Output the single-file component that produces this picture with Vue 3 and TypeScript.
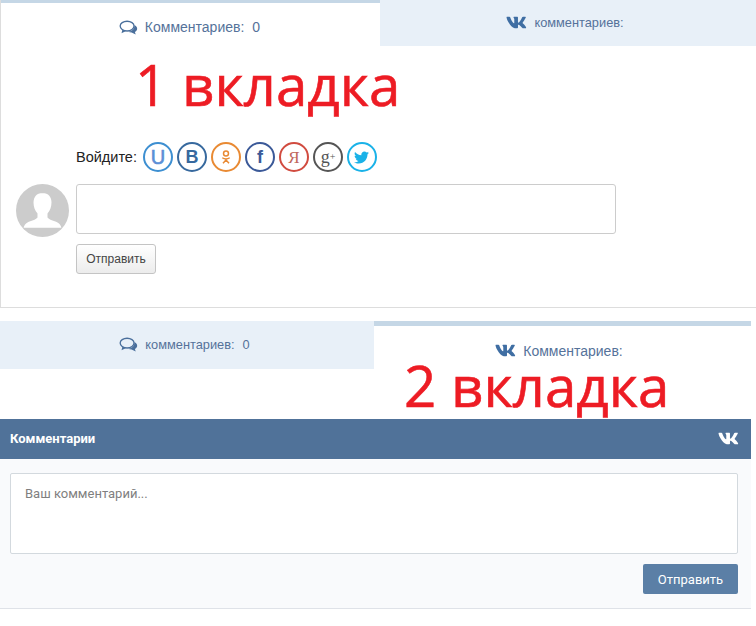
<script setup lang="ts">
const socials = [
  { id: "u", label: "U", color: "#3d8fd1", text: "#5b8fd6" },
  { id: "b", label: "В", color: "#37699e", text: "#37699e" },
  { id: "ok", label: "", color: "#e98a33", text: "#e98a33" },
  { id: "f", label: "f", color: "#3b5998", text: "#3b5998" },
  { id: "ya", label: "Я", color: "#d14b3f", text: "#c0665c" },
  { id: "g", label: "g", color: "#555555", text: "#555555" },
  { id: "tw", label: "", color: "#1ab2e8", text: "#1ab2e8" },
];

const vkPath =
  "M545 117.7c3.7-12.5 0-21.7-17.8-21.7h-58.9c-15 0-21.9 7.9-25.6 16.7 0 0-31.7 77.9-76.5 128.4-14.5 14.6-21.1 19.3-29 19.3-4 0-9.2-4.7-9.2-17.2V117.7c0-15-4.2-21.7-16.6-21.7h-92.6c-9.4 0-15 7-15 13.5 0 14.2 21.2 17.5 23.4 57.4v86.8c0 19-3.4 22.5-10.9 22.5-20 0-68.6-73.4-97.4-157.4-5.8-16.3-11.5-22.9-26.6-22.9H34.1C17.3 96 14 103.9 14 112.7c0 15.6 20 93.1 93.1 195.5C155.8 378 224.4 416 286.9 416c37.5 0 42.1-8.4 42.1-22.9 0-66.8-3.4-73.1 15.4-73.1 8.7 0 23.7 4.4 58.7 38.1 40 40 46.6 57.9 69 57.9h58.9c16.8 0 25.3-8.4 20.4-25-11.2-34.9-86.9-106.7-90.3-111.5-8.7-11.2-6.2-16.2 0-26.2.1-.1 72-101.3 79.4-135.6z";
const twitterPath =
  "M459.37 151.716c.325 4.548.325 9.097.325 13.645 0 138.72-105.583 298.558-298.558 298.558-59.452 0-114.68-17.219-161.137-47.106 8.447.974 16.568 1.299 25.34 1.299 49.055 0 94.213-16.568 130.274-44.832-46.132-.975-84.792-31.188-98.112-72.772 6.498.974 12.995 1.624 19.818 1.624 9.421 0 18.843-1.3 27.614-3.573-48.081-9.747-84.143-51.98-84.143-102.985v-1.299c13.969 7.797 30.214 12.67 47.431 13.319-28.264-18.843-46.781-51.005-46.781-87.391 0-19.492 5.197-37.36 14.294-52.954 51.655 63.675 129.3 105.258 216.365 109.807-1.624-7.797-2.599-15.918-2.599-24.04 0-57.828 46.782-104.934 104.934-104.934 30.213 0 57.502 12.67 76.67 33.137 23.715-4.548 46.456-13.32 66.599-25.34-7.798 24.366-24.366 44.833-46.132 57.827 21.117-2.273 41.584-8.122 60.426-16.243-14.292 20.791-32.161 39.308-52.628 54.253z";
</script>

<template>
  <div class="page">
    <!-- first tab -->
    <section class="block-one">
      <div class="tabs">
        <div class="tab tab-active tab-one-a">
          <svg class="icon-bubbles" viewBox="0 0 20 16">
            <ellipse cx="8.5" cy="6.5" rx="7.4" ry="5.2" fill="none" stroke="#4a6f9c" stroke-width="1.4" />
            <path d="M3.5 10.5 L2.5 14 L7.5 11.6 Z" fill="#4a6f9c" />
            <path d="M16.6 5.5c1.9 1.1 2.9 2.6 2.6 4.3-.2 1.3-1.1 2.3-2.4 3l.9 2.6-4.4-2.2c-1.4 0-2.7-.3-3.8-.9 3.6-.1 7.2-2.6 6.7-6.8z" fill="#4a6f9c" />
          </svg>
          <span>Комментариев:<span class="count">0</span></span>
        </div>
        <div class="tab tab-idle tab-one-b">
          <svg class="icon-vk" viewBox="0 0 576 512"><path :d="vkPath" /></svg>
          <span class="small">комментариев:</span>
        </div>
      </div>

      <div class="note note-one">1 вкладка</div>

      <div class="login">
        <span class="login-label">Войдите:</span>
        <div class="socials">
          <span
            v-for="s in socials"
            :key="s.id"
            class="social"
            :class="'social-' + s.id"
            :style="{ borderColor: s.color, color: s.text }"
          >
            <svg v-if="s.id === 'ok'" class="glyph" viewBox="0 0 16 20" fill="none" stroke="currentColor" stroke-width="2">
              <circle cx="8" cy="5.2" r="3.3" />
              <path d="M3 11c3 2 7 2 10 0M8 12.6v2M8 14l-4 4.4M8 14l4 4.4" />
            </svg>
            <svg v-else-if="s.id === 'tw'" class="glyph-tw" viewBox="0 0 512 512" fill="currentColor">
              <path :d="twitterPath" />
            </svg>
            <template v-else>{{ s.label }}<sup v-if="s.id === 'g'" class="plus">+</sup></template>
          </span>
        </div>
      </div>

      <div class="comment-form">
        <svg class="avatar" viewBox="0 0 53 53">
          <circle cx="26.5" cy="26.5" r="26.5" fill="#cccccc" />
          <path
            d="M26.5 9c-6 0-9 4.2-9 9.6 0 4.6 1.6 8.4 4 10.8v4c-1.7 2.4-6.5 3.2-10 5-2.2 1.2-3.4 2.8-3.9 5.4h37.8c-.5-2.6-1.7-4.2-3.9-5.4-3.5-1.8-8.3-2.6-10-5v-4c2.4-2.4 4-6.2 4-10.8 0-5.4-3-9.6-9-9.6z"
            fill="#ffffff"
          />
        </svg>
        <div class="form-col">
          <div class="input-box"></div>
          <button class="btn-grey" type="button">Отправить</button>
        </div>
      </div>
    </section>

    <!-- second tab -->
    <section class="block-two">
      <div class="tabs tabs-two">
        <div class="tab tab-idle tab-two-a">
          <svg class="icon-bubbles" viewBox="0 0 20 16">
            <ellipse cx="8.5" cy="6.5" rx="7.4" ry="5.2" fill="none" stroke="#4a6f9c" stroke-width="1.4" />
            <path d="M3.5 10.5 L2.5 14 L7.5 11.6 Z" fill="#4a6f9c" />
            <path d="M16.6 5.5c1.9 1.1 2.9 2.6 2.6 4.3-.2 1.3-1.1 2.3-2.4 3l.9 2.6-4.4-2.2c-1.4 0-2.7-.3-3.8-.9 3.6-.1 7.2-2.6 6.7-6.8z" fill="#4a6f9c" />
          </svg>
          <span class="small">комментариев:<span class="count">0</span></span>
        </div>
        <div class="tab tab-active tab-two-b">
          <svg class="icon-vk" viewBox="0 0 576 512"><path :d="vkPath" /></svg>
          <span>Комментариев:</span>
        </div>
      </div>

      <div class="vk-widget">
        <div class="note note-two">2 вкладка</div>
        <header class="vk-head">
          <span>Комментарии</span>
          <svg class="vk-logo" viewBox="0 0 576 512"><path :d="vkPath" /></svg>
        </header>
        <div class="vk-body">
          <div class="vk-input">Ваш комментарий...</div>
          <div class="vk-actions">
            <button class="btn-blue" type="button">Отправить</button>
          </div>
        </div>
      </div>
    </section>
  </div>
</template>

<style>
html,
body {
  background: #ffffff;
}
</style>

<style scoped>
.page {
  width: 756px;
  height: 626px;
  overflow: hidden;
  font-family: "Liberation Sans", Arial, sans-serif;
  color: #55729a;
}

.block-one {
  height: 308px;
  box-sizing: border-box;
  border-left: 1px solid #dddddd;
  border-bottom: 1px solid #dddddd;
}

.tabs {
  display: flex;
  align-items: flex-start;
}

.tab {
  display: flex;
  align-items: center;
  justify-content: center;
  box-sizing: border-box;
  font-size: 14px;
}

.tab-active {
  background: #ffffff;
}

.tab-idle {
  background: #e8f0f8;
}

.small {
  font-size: 12.8px;
}

.count {
  margin-left: 8px;
}

.tab-one-a {
  width: 379px;
  height: 46px;
  border-top: 3px solid #c5d7e6;
  gap: 7px;
  padding: 5px 2px 0 0;
}

.tab-one-b {
  width: 376px;
  height: 46px;
  gap: 7px;
  padding: 0 6px 2px 0;
}

.tab-two-a {
  width: 374px;
  height: 48px;
  gap: 7px;
  padding: 0 5px 2px 0;
}

.tab-two-b {
  width: 377px;
  height: 48px;
  border-top: 5px solid #c5d7e6;
  gap: 7px;
  padding: 6px 7px 0 0;
  align-self: flex-start;
}

.icon-bubbles {
  width: 19px;
  height: 15px;
  flex: none;
}

.icon-vk {
  width: 21px;
  height: 19px;
  fill: #3f6ea3;
  flex: none;
}

.note {
  font-family: "Open Sans", "Noto Sans", sans-serif;
  font-size: 56.5px;
  line-height: 44px;
  color: #ed1c24;
  white-space: nowrap;
  -webkit-text-stroke: 0.6px #ed1c24;
}

.note-one {
  margin: 17px 0 0 134px;
}

.note-two {
  position: absolute;
  left: 404px;
  top: -55px;
}

.login {
  display: flex;
  align-items: center;
  margin: 34px 0 0 75px;
  height: 32px;
}

.login-label {
  font-size: 14.5px;
  color: #222222;
  margin-right: 6px;
}

.socials {
  display: flex;
  gap: 4px;
}

.social {
  width: 30px;
  height: 30px;
  box-sizing: border-box;
  border: 2px solid;
  border-radius: 50%;
  display: flex;
  align-items: center;
  justify-content: center;
  font-size: 18px;
  font-weight: 700;
  line-height: 1;
}

.social-u {
  font-size: 20px;
  font-weight: 400;
  -webkit-text-stroke: 0.6px currentColor;
}

.social-ya {
  font-weight: 400;
  font-family: "Liberation Serif", serif;
  font-size: 17px;
}

.social-g {
  font-weight: 400;
  font-family: "Liberation Serif", serif;
  font-size: 18px;
}

.plus {
  font-size: 10px;
  line-height: 0;
  vertical-align: 5px;
}

.glyph {
  width: 12px;
  height: 16px;
}

.glyph-tw {
  width: 15px;
  height: 15px;
}

.comment-form {
  display: flex;
  align-items: flex-start;
  gap: 7px;
  margin: 11px 0 0 15px;
}

.avatar {
  width: 53px;
  height: 53px;
  flex: none;
}

.form-col {
  display: flex;
  flex-direction: column;
  align-items: flex-start;
  gap: 10px;
}

.input-box {
  width: 540px;
  height: 50px;
  box-sizing: border-box;
  border: 1px solid #cccccc;
  border-radius: 3px;
  background: #ffffff;
}

.btn-grey {
  width: 80px;
  height: 30px;
  border: 1px solid #c4c4c4;
  border-radius: 3px;
  background: linear-gradient(#ffffff, #ececec);
  font-family: "Liberation Sans", Arial, sans-serif;
  font-size: 12px;
  color: #444444;
  padding: 0;
}

.block-two {
  margin-top: 13px;
}

.tabs-two {
  height: 98px;
}

.vk-widget {
  position: relative;
  width: 751px;
  font-family: Roboto, sans-serif;
}

.vk-head {
  height: 40px;
  background: #507299;
  color: #ffffff;
  font-size: 13px;
  font-weight: 700;
  display: flex;
  align-items: center;
  justify-content: space-between;
  padding: 0 12px 2px 10px;
  box-sizing: border-box;
}

.vk-logo {
  width: 21px;
  height: 19px;
  fill: #ffffff;
}

.vk-body {
  height: 150px;
  box-sizing: border-box;
  background: #f9fafc;
  border-bottom: 1px solid #dfe2e8;
  padding: 14px 13px 0 10px;
}

.vk-input {
  height: 81px;
  box-sizing: border-box;
  background: #ffffff;
  border: 1px solid #d3d9de;
  border-radius: 2px;
  padding: 12px 14px;
  font-size: 13px;
  color: #7f7f7f;
}

.vk-actions {
  display: flex;
  justify-content: flex-end;
  margin-top: 10px;
}

.btn-blue {
  width: 95px;
  height: 30px;
  border: 0;
  border-radius: 2px;
  background: #5b7fa6;
  color: #ffffff;
  font-family: Roboto, sans-serif;
  font-size: 13px;
  padding: 0;
}
</style>
